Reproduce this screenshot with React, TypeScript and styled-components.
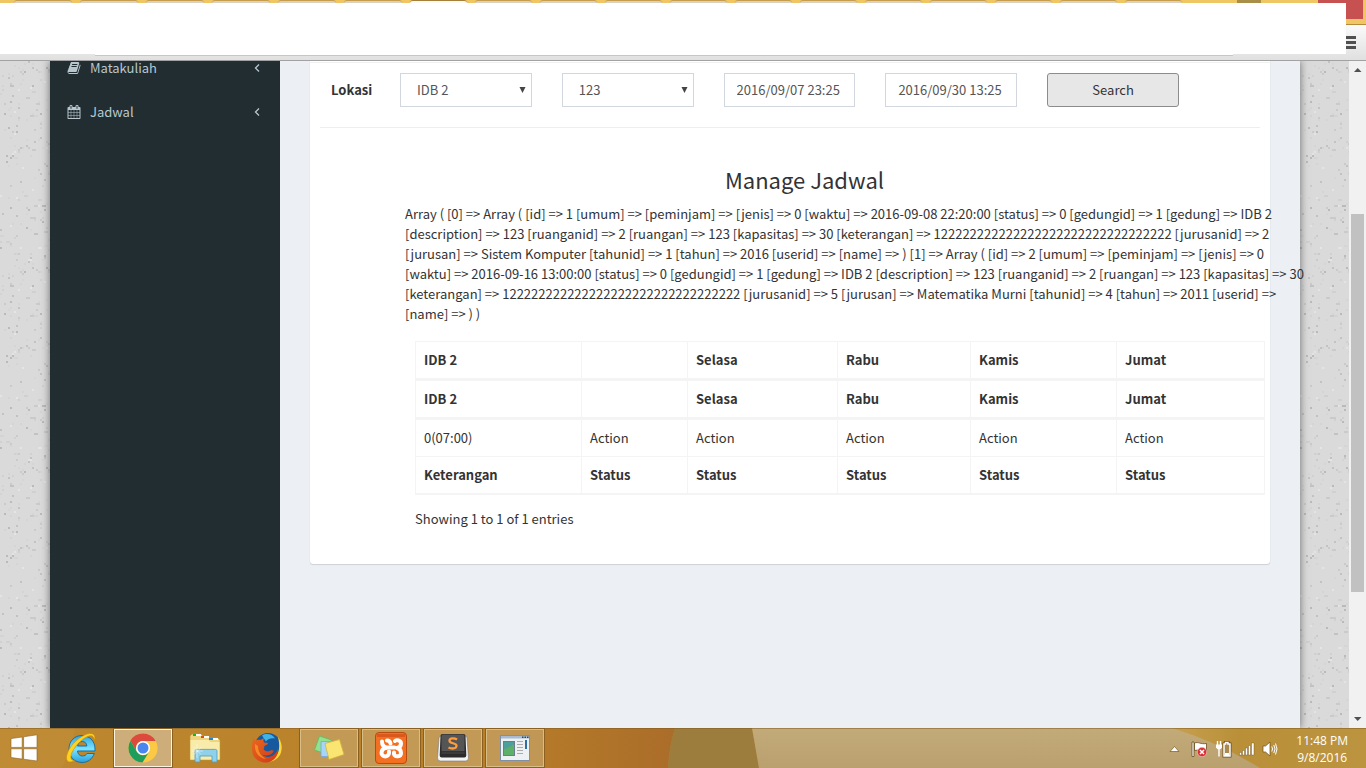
import React from "react";
import styled, { createGlobalStyle } from "styled-components";

const GlobalStyle = createGlobalStyle`
  *, *::before, *::after { box-sizing: border-box; }
  html, body { margin: 0; height: 100%; overflow: hidden; }
  body {
    font-family: "Noto Sans CJK JP", "Noto Sans", sans-serif;
    font-size: 13px;
    line-height: 20px;
    color: #333;
    background: #dadada;
  }
  #root { height: 100%; }
  button, input, select { font: inherit; margin: 0; }
`;

const Desktop = styled.div`
  display: grid;
  grid-template-rows: auto minmax(0, 1fr) auto;
  height: 100vh;
`;

/* ---------- browser frame ---------- */

const Frame = styled.header`
  position: relative;
  height: 61px;
  background: linear-gradient(#f0c564 0 24px, #b48a3c 24px 25px, #fafafa 25px, #e0e0e0 60px);
  border-bottom: 1px solid #a2a2a2;
`;

const TabStrip = styled.div`
  display: flex;
  gap: 8px;
  height: 3px;
  padding-left: 14px;
`;

const Tab = styled.span<{ $active?: boolean; $width: number }>`
  flex: none;
  width: ${(p) => p.$width}px;
  height: 3px;
  border-top: 1px solid ${(p) => (p.$active ? "#a5803a" : "#c79c4c")};
  border-radius: 3px 3px 0 0;
  background: ${(p) => (p.$active ? "#fbfaf6" : "#d8d2c2")};
`;

const WindowButton = styled.span<{ $right: number; $width: number; $height: number; $color: string }>`
  position: absolute;
  top: 0;
  right: ${(p) => p.$right}px;
  width: ${(p) => p.$width}px;
  height: ${(p) => p.$height}px;
  background: ${(p) => p.$color};
`;

const BlankPanel = styled.div`
  position: relative;
  height: 51px;
  margin-right: 20px;
  background: #fff;
`;

const AddressEdge = styled.div`
  height: 2px;
  margin: 0 133px 0 95px;
  background: #fff;
  border-bottom: 1px solid #c6c6c6;
`;

const MenuButton = styled.button`
  position: absolute;
  top: 36px;
  right: 10px;
  width: 10px;
  height: 13px;
  padding: 0;
  border: 0;
  background: linear-gradient(#505050 0 3px, transparent 3px 5px, #505050 5px 8px, transparent 8px 10px, #505050 10px 13px);
`;

/* ---------- page ---------- */

const Viewport = styled.div`
  display: flex;
  min-height: 0;
  overflow: hidden;
`;

const Side = styled.div<{ $width: number }>`
  flex: 0 0 ${(p) => p.$width}px;
  overflow: hidden;
  background: #dadada;
`;

const Wrapper = styled.div`
  position: relative;
  display: flex;
  flex: 1;
  min-width: 0;
  box-shadow: 0 0 8px rgba(0, 0, 0, 0.5);
`;

const Sidebar = styled.aside`
  flex: 0 0 230px;
  overflow: hidden;
  background: #222d32;
`;

const Menu = styled.nav`
  display: flex;
  flex-direction: column;
  margin-top: -15px;
`;

const MenuLink = styled.a`
  display: flex;
  align-items: center;
  gap: 9px;
  height: 44px;
  padding: 0 20px 0 17px;
  line-height: 14px;
  color: #b8c7ce;
  text-decoration: none;

  svg { flex: none; fill: currentColor; }
  span { flex: 1; }
`;

const Content = styled.main`
  flex: 1;
  min-width: 0;
  padding: 0 30px;
  background: #ecf0f5;
`;

const Box = styled.section`
  padding: 1px 10px 35px;
  border-radius: 0 0 3px 3px;
  background: #fff;
  box-shadow: 0 1px 1px rgba(0, 0, 0, 0.12), 0 0 1px rgba(0, 0, 0, 0.15);
`;

const TopRule = styled.hr`
  height: 1px;
  margin: 0 -10px 10px;
  border: 0;
  background: #f0f0f0;
`;

const Filters = styled.form`
  display: grid;
  grid-template-columns: 39px repeat(5, minmax(0, 1fr));
  align-items: center;
  gap: 30px;
  padding: 0 81px 20px 11px;
  border-bottom: 1px solid #eee;
`;

const FilterLabel = styled.label`
  font-weight: 700;
`;

const SelectWrap = styled.div`
  position: relative;

  svg {
    position: absolute;
    top: 14px;
    right: 6px;
    fill: #444;
    pointer-events: none;
  }
`;

const Select = styled.select`
  appearance: none;
  display: block;
  width: 100%;
  height: 34px;
  padding: 0 16px;
  border: 1px solid #d2d6de;
  border-radius: 0;
  background: #fff;
  color: #555;
`;

const DateInput = styled.input`
  display: block;
  width: 100%;
  height: 34px;
  padding: 0 12px 2px;
  border: 1px solid #d2d6de;
  border-radius: 0;
  background: #fff;
  color: #555;
`;

const SearchButton = styled.button`
  height: 34px;
  padding: 0;
  border: 1px solid #8c8c8c;
  border-radius: 3px;
  background: #e7e7e7;
  color: #333;
`;

const Report = styled.div`
  margin: 38px -5px 0 85px;
`;

const Title = styled.h1`
  margin: 0 71px 12px 0;
  padding-left: 10px;
  font-size: 22px;
  line-height: 26px;
  font-weight: 400;
  text-align: center;
`;

const Dump = styled.p`
  margin: 0;
  white-space: nowrap;
`;

const TableArea = styled.div`
  padding: 17px 10px 0;
`;

const Table = styled.table`
  width: 100%;
  table-layout: fixed;
  border-collapse: separate;
  border-spacing: 0;
  border: solid #f4f4f4;
  border-width: 1px 0 0 1px;
`;

const Row = styled.tr<{ $rule: number }>`
  th, td {
    height: ${(p) => p.$rule + 36}px;
    padding: 0 8px;
    border: solid #f4f4f4;
    border-width: 0 1px ${(p) => p.$rule}px 0;
    text-align: left;
  }
`;

const Info = styled.p`
  margin: 14px 0 0;
`;

/* ---------- scrollbar ---------- */

const ScrollBar = styled.div`
  display: flex;
  flex-direction: column;
  flex: 0 0 17px;
  background: #f1f1f1;
`;

const ScrollArrow = styled.svg`
  flex: none;
  width: 17px;
  height: 17px;
  fill: #505050;
`;

const ScrollSpace = styled.div<{ $share: number }>`
  flex: ${(p) => p.$share} 0 0;
`;

const ScrollThumb = styled(ScrollSpace)`
  margin: 0 2px;
  background: #c1c1c1;
`;

/* ---------- taskbar ---------- */

const Taskbar = styled.footer`
  position: relative;
  display: flex;
  justify-content: space-between;
  height: 40px;
  overflow: hidden;
  background: #b98530;
`;

const Wallpaper = styled.svg`
  position: absolute;
  inset: 0;
  width: 100%;
  height: 100%;
`;

const Apps = styled.div`
  position: relative;
  display: flex;
  gap: 4px;
  padding-top: 1px;
`;

const AppButton = styled.button<{ $state?: "open" | "active" }>`
  display: flex;
  align-items: center;
  justify-content: center;
  width: 58px;
  height: 38px;
  padding: 0;
  border: 1px solid
    ${(p) => (p.$state === "active" ? "#fdf3e0" : p.$state === "open" ? "#d9bd86" : "transparent")};
  outline: ${(p) => (p.$state ? "1px solid #8b6020" : "none")};
  background: ${(p) =>
    p.$state === "active" ? "#cdae7a" : p.$state === "open" ? "rgba(200, 170, 115, 0.6)" : "transparent"};
`;

const StartButton = styled(AppButton)`
  width: 48px;
`;

const Tray = styled.div`
  position: relative;
  display: flex;
  align-items: center;
  gap: 7px;
  padding: 1px 18px 0 0;
`;

const TrayToggle = styled.svg`
  margin-right: 4px;
`;

const Clock = styled.time`
  margin-left: 11px;
  font-family: "Open Sans", sans-serif;
  font-size: 12px;
  line-height: 17px;
  text-align: center;
  color: #fff;
`;

/* ---------- drawings ---------- */

function makeSpeckles(seed: number, count: number) {
  let s = seed;
  const next = () => {
    s = (s * 16807) % 2147483647;
    return s / 2147483647;
  };
  const tones = ["#cacaca", "#d0d0d0", "#c2c2c2", "#d4d4d4", "#e4e4e4", "#d5d5d5", "#bababa"];
  return Array.from({ length: count }, () => ({
    x: Math.floor(next() * 26) * 2,
    y: Math.floor(next() * 100) * 2,
    w: next() > 0.85 ? 4 : 2,
    c: tones[Math.floor(next() * tones.length)],
  }));
}

const speckles = makeSpeckles(4711, 170);

function Texture({ id }: { id: string }) {
  return (
    <svg width="100%" height="100%" aria-hidden="true">
      <pattern id={id} width="52" height="200" patternUnits="userSpaceOnUse">
        {speckles.map((d, i) => (
          <rect key={i} x={d.x} y={d.y} width={d.w} height="2" fill={d.c} />
        ))}
      </pattern>
      <rect width="100%" height="100%" fill={`url(#${id})`} />
    </svg>
  );
}

const BookIcon = () => (
  <svg width="14" height="14" viewBox="0 0 1664 1792" aria-hidden="true">
    <path d="M1639 478q40 57 18 129l-275 906q-19 64-76.5 107.5t-122.5 43.5h-923q-77 0-148.5-53.5t-99.5-131.5q-24-67-2-127 0-4 3-27t4-37q1-8-3-21.5t-3-19.5q2-11 8-21t16.5-23.5 16.5-23.5q23-38 45-91.5t30-91.5q3-10 .5-30t-.5-28q3-11 17-28t17-23q21-36 42-92t25-90q1-9-2.5-32t.5-28q4-13 22-30.5t22-22.5q19-26 42.5-84.5t27.5-96.5q1-8-3-25.5t-2-26.5q2-8 9-18t18-23 17-21q8-12 16.5-30.5t15-35 16-36 19.5-32 26.5-23.5 36-11.5 47.5 5.5l-1 3q38-9 51-9h761q74 0 114 56t18 130l-274 906q-36 119-71.5 153.5t-128.500 34.500h-869q-27 0-38 15-11 16-1 43 24 70 144 70h923q29 0 56-15.500t35-41.500l300-987q7-22 5-57 38 15 59 43zm-1064 2q-4 13 2 22.500t20 9.500h608q13 0 25.500-9.500t16.500-22.500l21-64q4-13-2-22.500t-20-9.500h-608q-13 0-25.500 9.500t-16.500 22.500zm-83 256q-4 13 2 22.500t20 9.500h608q13 0 25.500-9.500t16.500-22.500l21-64q4-13-2-22.500t-20-9.500h-608q-13 0-25.500 9.500t-16.500 22.500z" />
  </svg>
);

const CalendarIcon = () => (
  <svg width="14" height="14" viewBox="64 0 1664 1792" aria-hidden="true">
    <path d="M192 1664h288v-288h-288v288zm352 0h320v-288h-320v288zm-352-352h288v-320h-288v320zm352 0h320v-320h-320v320zm-352-384h288v-288h-288v288zm736 736h320v-288h-320v288zm-384-736h320v-288h-320v288zm768 736h288v-288h-288v288zm-384-352h320v-320h-320v320zm-352-864v-288q0-13-9.500-22.500t-22.500-9.500h-64q-13 0-22.500 9.500t-9.500 22.500v288q0 13 9.500 22.500t22.500 9.500h64q13 0 22.500-9.500t9.500-22.500zm736 864h288v-320h-288v320zm-384-384h320v-288h-320v288zm384 0h288v-288h-288v288zm32-480v-288q0-13-9.500-22.500t-22.500-9.500h-64q-13 0-22.500 9.500t-9.500 22.500v288q0 13 9.500 22.500t22.500 9.500h64q13 0 22.500-9.500t9.500-22.500zm384-64v1280q0 52-38 90t-90 38h-1408q-52 0-90-38t-38-90v-1280q0-52 38-90t90-38h128v-96q0-66 47-113t113-47h64q66 0 113 47t47 113v96h384v-96q0-66 47-113t113-47h64q66 0 113 47t47 113v96h128q52 0 90 38t38 90z" />
  </svg>
);

const AngleLeft = () => (
  <svg width="6" height="10" viewBox="0 0 6 10" aria-hidden="true">
    <path d="M5 1.5 1.5 5 5 8.5" style={{ fill: "none" }} stroke="currentColor" strokeWidth="1.3" />
  </svg>
);

const DropArrow = () => (
  <svg width="7" height="6" viewBox="0 0 7 6" aria-hidden="true">
    <path d="M.5 0h6L3.500 6z" />
  </svg>
);

const WindowsIcon = () => (
  <svg width="28" height="28" viewBox="0 0 28 28" aria-hidden="true">
    <path
      d="M1 4.600 12.200 3v10.400H1zM13.600 2.800 27 .8v12.600H13.600zM1 14.800h11.200v10.300L1 23.500zM13.600 14.800H27V27l-13.400-1.800z"
      fill="#fff" stroke="#8c6220" strokeWidth=".6"
    />
  </svg>
);

const IeIcon = () => (
  <svg width="32" height="32" viewBox="0 0 32 32" aria-hidden="true">
    <defs>
      <linearGradient id="ie" x1="0" y1="0" x2="0" y2="1">
        <stop offset="0" stopColor="#2ea6dc" /><stop offset=".5" stopColor="#7be4ff" /><stop offset="1" stopColor="#2aa0dc" />
      </linearGradient>
    </defs>
    <path
      d="M17 3.500c7.500 0 13 5.500 13 13.500v2H12.500c.3 3 2.200 5 5 5 2 0 3.600-1 4.500-2.500h7.300C27.500 26.700 23 30.500 17.200 30.500 9.500 30.500 4 25 4 17S9.500 3.500 17 3.500zM12.600 14h9.300c-.3-2.800-2-4.500-4.600-4.500s-4.300 1.700-4.700 4.500z"
      fill="url(#ie)" stroke="#14679d" strokeWidth=".9"
    />
    <path
      d="M29.500 9C31 4.500 29 1 24.500 1.500 18 2.300 8.500 9.500 4 17.500.500 24 .500 30 5 30c1.500 0 3-.5 4.500-1.300C5.500 28.500 5 25 7 20.500 10.500 13 19 4.700 25 3.800c3-.4 4.300 1.700 4.500 5.200z"
      fill="#ffd21f" stroke="#c98a08" strokeWidth=".6"
    />
  </svg>
);

const ChromeIcon = () => (
  <svg width="30" height="30" viewBox="0 0 30 30" aria-hidden="true">
    <circle cx="15" cy="15" r="14.600" fill="#fbc943" />
    <path d="M2.400 7.700A14.600 14.600 0 0 1 27.700 8H15a7.200 7.200 0 0 0-6.300 10.500z" fill="#dc4a3d" />
    <path d="M2.400 7.700A14.600 14.600 0 0 0 14.500 29.600l6.800-11.100a7.200 7.200 0 0 1-12.600 0z" fill="#1f9d5b" />
    <circle cx="15" cy="15" r="7" fill="#fff" />
    <circle cx="15" cy="15" r="5.500" fill="#4a86ee" />
  </svg>
);

const ExplorerIcon = () => (
  <svg width="34" height="32" viewBox="0 0 34 32" aria-hidden="true">
    <path d="M2 4 4 2h9l2 2h5l1 2h9l2 2v20H2z" fill="#eed57d" stroke="#b99637" strokeWidth=".7" />
    <path d="M5 2h8v2H5z" fill="#fff" /><path d="M5 2h3v2H5z" fill="#19b51f" />
    <path d="M13 4h8v2h-8z" fill="#fff" /><path d="M13 4h3v2h-3z" fill="#d9492a" />
    <path d="M21 6h9v2h-9z" fill="#fff" /><path d="M21 6h4v2h-4z" fill="#1d87dc" />
    <path d="M2.500 8h18l2 2h9v17.500h-29z" fill="#f9eba9" />
    <path d="M7 19c0-1 .6-1.600 1.500-1.600h19c1 0 1.500.6 1.500 1.600v11h-5v-6H12v6H7z" fill="#8fd0ea" stroke="#4f9dc4" strokeWidth=".8" />
    <path d="M9 12v14M4 19h11M6 15.500l7 7m0-7-7 7" stroke="#fff" strokeWidth=".5" />
  </svg>
);

const FirefoxIcon = () => (
  <svg width="32" height="32" viewBox="0 0 32 32" aria-hidden="true">
    <defs>
      <linearGradient id="fx" x1="0" y1="0" x2="1" y2="1">
        <stop offset="0" stopColor="#e86a1c" /><stop offset="1" stopColor="#d2371a" />
      </linearGradient>
    </defs>
    <circle cx="17" cy="14" r="13" fill="#17599f" />
    <path d="M11 3.500c5-3 11-1 13 3-4-1-8 1-9 3z" fill="#3fb3e4" />
    <path d="M27 5c4 5 5 12 2 18-4 6-10 8-15 6 8 0 13-5 14-12 .5-4 0-8-1-12z" fill="#ffd735" />
    <path
      d="M3 5c0 1.500.5 3 1.500 3.500C6 7.500 8 7.500 9.500 8L13 6c-.5 1.500-1 3 0 4.500l4 .5c0 1.500-2 2-3.500 3-.8 1 0 2.500-1 3 1.500 2.500 4 3 7 1.500 1.500-.7 3 0 3 1-2 4-8 5-11.500 3 5 5 14 2 16-6 .5 8-5 14-12 14C7 30.500 1 25 1 17.500 1 12 1.500 8 3 5z"
      fill="url(#fx)"
    />
    <path d="M4 12c-1 8 4 14 11 15-5-3-8-7-8-13z" fill="#f58a25" />
  </svg>
);

const NotesIcon = () => (
  <svg width="34" height="28" viewBox="0 0 34 28" aria-hidden="true">
    <path d="m7.500 2 12 4-5 14-12-4z" fill="#93e08f" stroke="#5dbb62" strokeWidth=".8" />
    <path d="M9 7.500h13v15H9z" fill="#a6d4fa" stroke="#6da9dc" strokeWidth=".8" />
    <path d="m13 9.500 14.500-4 4.500 15-15 5z" fill="#fbe572" stroke="#d3b23c" strokeWidth=".8" />
  </svg>
);

const XamppIcon = () => (
  <svg width="32" height="32" viewBox="0 0 32 32" aria-hidden="true">
    <rect x=".5" y=".5" width="31" height="31" rx="3.500" fill="#f36f21" stroke="#b94a10" />
    <path d="M2 2h28v3H2z" fill="#c84a16" opacity=".6" />
    <g fill="none" stroke="#fff" strokeWidth="4" strokeLinecap="round" strokeLinejoin="round">
      <path d="M7 9.500q0 5.500 5 6h7.500M20 9c1-1.500 6-1 6 2.500 0 2.500-1.500 4-4 4.500 2.500.5 4 2 4 5 0 4-6 4.500-7 1v-1.500" />
      <path d="M12 8.500q3 0 3.500 3M11 16c-3 .5-4.500 2-4.500 5 0 4.500 7.500 4.500 7.500 0V19.500" />
    </g>
  </svg>
);

const SublimeIcon = () => (
  <svg width="32" height="30" viewBox="0 0 32 30" aria-hidden="true">
    <path d="M2 5q0-2 2-2h24q2 0 2 2l1.500 20q0 3-3 3h-25q-3 0-3-3z" fill="#f4f4f4" stroke="#777" strokeWidth=".6" />
    <path d="M3.500 3q0-2 2-2h21q2 0 2 2l.8 19.500q0 2-2 2H4.700q-2 0-2-2z" fill="#2b2b2b" />
    <path d="M4.500 3q0-1.500 1.500-1.500h20Q27.500 1.500 27.500 3v15h-23z" fill="#555" />
    <path d="M4.500 18.500h23V21h-23z" fill="#3a3a3a" />
    <path d="M20 6.500c-2-1.300-7.500-2-7.500 1.200 0 3.300 7.500 1.800 7 5.300-.3 3-5 3-8 1.500" fill="none" stroke="#ff9d3c" strokeWidth="2.300" />
  </svg>
);

const ViewerIcon = () => (
  <svg width="30" height="26" viewBox="0 0 30 26" aria-hidden="true">
    <rect x=".5" y=".5" width="29" height="25" fill="#eef1f4" stroke="#7f90a5" />
    <path d="M1 1h28v2.500H1z" fill="#a9bbd2" /><path d="M22 1.500h1.500V3H22zm2.500 0H26V3h-1.500zm2.500 0h1.500V3H27z" fill="#345" />
    <rect x="3.500" y="6.500" width="11" height="14" fill="#4c9f9b" stroke="#6d7c8c" />
    <path d="M4 14q5-1 10-5v11H4z" fill="#5db069" />
    <path d="M17 6.500h6M17 9.500h6M17 12.500h6M17 15.500h6M17 18.500h6" stroke="#aaa" />
    <path d="M25 5h2v9h-2z" fill="#2f6ea5" />
  </svg>
);

const HiddenIcons = () => (
  <TrayToggle width="11" height="8" viewBox="0 0 11 8" aria-hidden="true">
    <path d="M1 6.500 5.500 1.500 10 6.500z" fill="#fff" stroke="#7a5a20" strokeWidth=".7" />
  </TrayToggle>
);

const FlagIcon = () => (
  <svg width="17" height="18" viewBox="0 0 17 18" aria-hidden="true">
    <path d="M1 2h2v14.500H1zM3.500 3c4-1.500 6 1.500 12 .5V11C10 12 8 9 3.500 10.500z" fill="#fff" stroke="#6a4d1e" strokeWidth=".8" />
    <circle cx="11" cy="12" r="4.700" fill="#dc2f34" stroke="#fff" strokeWidth=".4" />
    <path d="m9 10 4 4m0-4-4 4" stroke="#fff" strokeWidth="1.500" />
  </svg>
);

const BatteryIcon = () => (
  <svg width="17" height="18" viewBox="0 0 17 18" aria-hidden="true">
    <path d="M2.500 1v4M5.500 1v4M4 8v8.500" stroke="#fff" strokeWidth="1.400" fill="none" />
    <path d="M1 4.500h6v3Q6 9.500 4 9.500T1 7.500z" fill="#fff" />
    <path d="M9 4h1.500V2.500H13V4h2v12H9z" fill="#a98a50" stroke="#6a4d1e" strokeWidth="3" />
    <path d="M9 4h1.500V2.500H13V4h2v12H9z" fill="#a98a50" stroke="#fff" strokeWidth="1.500" />
    <path d="M10 13h4v3h-4z" fill="#fff" />
  </svg>
);

const SignalIcon = () => (
  <svg width="16" height="14" viewBox="0 0 16 14" aria-hidden="true">
    <path d="M.5 10.500h2V13h-2zM3.500 8.500h2V13h-2zM6.500 6h2v7h-2zM9.500 3.500h2V13h-2zM12.500 1h2.500v12h-2.500z" fill="#fff" stroke="#6a4d1e" strokeWidth=".4" />
  </svg>
);

const SpeakerIcon = () => (
  <svg width="16" height="16" viewBox="0 0 16 16" aria-hidden="true">
    <path d="M1 5h2.500L8 1v14l-4.500-4H1z" fill="#fff" stroke="#6a4d1e" strokeWidth=".7" />
    <path d="M9.800 5.500q1.500 2.500 0 5M11.800 4q2.500 4 0 8M13.500 2.500q3 5.500 0 11" fill="none" stroke="#fff" />
  </svg>
);

/* ---------- data ---------- */

const tabWidths = [58, 58, 58, 58, 58, 58, 57, 57, 57, 57, 57, 57, 57, 57, 57, 57, 57, 57];

const dumpLines = [
  "Array ( [0] => Array ( [id] => 1 [umum] => [peminjam] => [jenis] => 0 [waktu] => 2016-09-08 22:20:00 [status] => 0 [gedungid] => 1 [gedung] => IDB 2",
  "[description] => 123 [ruanganid] => 2 [ruangan] => 123 [kapasitas] => 30 [keterangan] => 122222222222222222222222222222222 [jurusanid] => 2",
  "[jurusan] => Sistem Komputer [tahunid] => 1 [tahun] => 2016 [userid] => [name] => ) [1] => Array ( [id] => 2 [umum] => [peminjam] => [jenis] => 0",
  "[waktu] => 2016-09-16 13:00:00 [status] => 0 [gedungid] => 1 [gedung] => IDB 2 [description] => 123 [ruanganid] => 2 [ruangan] => 123 [kapasitas] => 30",
  "[keterangan] => 122222222222222222222222222222222 [jurusanid] => 5 [jurusan] => Matematika Murni [tahunid] => 4 [tahun] => 2011 [userid] =>",
  "[name] => ) )",
];

const columnWidths = [166, 106, 150, 133, 146, 148];
const headings = ["IDB 2", "", "Selasa", "Rabu", "Kamis", "Jumat"];
const slots = ["0(07:00)", "Action", "Action", "Action", "Action", "Action"];
const statuses = ["Keterangan", "Status", "Status", "Status", "Status", "Status"];

const HeadingRow = ({ cells, rule }: { cells: string[]; rule: number }) => (
  <Row $rule={rule}>
    {cells.map((c, i) => (
      <th key={i}>{c}</th>
    ))}
  </Row>
);

export default function App() {
  return (
    <Desktop>
      <GlobalStyle />
      <Frame>
        <TabStrip>
          {tabWidths.map((w, i) => (
            <Tab key={i} $width={w} $active={i === 6} />
          ))}
        </TabStrip>
        <WindowButton $right={105} $width={24} $height={3} $color="#a98e48" />
        <WindowButton $right={3} $width={45} $height={19} $color="#c75050" />
        <BlankPanel />
        <AddressEdge />
        <MenuButton aria-label="Menu" />
      </Frame>

      <Viewport>
        <Side $width={50}><Texture id="speckle-left" /></Side>
        <Wrapper>
          <Sidebar>
            <Menu>
              <MenuLink href="#matakuliah"><BookIcon /><span>Matakuliah</span><AngleLeft /></MenuLink>
              <MenuLink href="#jadwal"><CalendarIcon /><span>Jadwal</span><AngleLeft /></MenuLink>
            </Menu>
          </Sidebar>
          <Content>
            <Box>
              <TopRule />
              <Filters onSubmit={(e) => e.preventDefault()}>
                <FilterLabel htmlFor="lokasi">Lokasi</FilterLabel>
                <SelectWrap>
                  <Select id="lokasi" defaultValue="IDB 2"><option>IDB 2</option></Select>
                  <DropArrow />
                </SelectWrap>
                <SelectWrap>
                  <Select aria-label="Ruangan" defaultValue="123"><option>123</option></Select>
                  <DropArrow />
                </SelectWrap>
                <DateInput aria-label="Mulai" defaultValue="2016/09/07 23:25" />
                <DateInput aria-label="Selesai" defaultValue="2016/09/30 13:25" />
                <SearchButton type="submit">Search</SearchButton>
              </Filters>
              <Report>
                <Title>Manage Jadwal</Title>
                <Dump>
                  {dumpLines.map((line, i) => (
                    <React.Fragment key={i}>{line}<br /></React.Fragment>
                  ))}
                </Dump>
                <TableArea>
                  <Table>
                    <colgroup>
                      {columnWidths.map((w, i) => (
                        <col key={i} width={w} />
                      ))}
                    </colgroup>
                    <thead>
                      <HeadingRow cells={headings} rule={3} />
                      <HeadingRow cells={headings} rule={3} />
                    </thead>
                    <tbody>
                      <Row $rule={1}>
                        {slots.map((c, i) => (
                          <td key={i}>{c}</td>
                        ))}
                      </Row>
                    </tbody>
                    <tfoot>
                      <HeadingRow cells={statuses} rule={2} />
                    </tfoot>
                  </Table>
                  <Info>Showing 1 to 1 of 1 entries</Info>
                </TableArea>
              </Report>
            </Box>
          </Content>
        </Wrapper>
        <Side $width={49}><Texture id="speckle-right" /></Side>
        <ScrollBar aria-hidden="true">
          <ScrollArrow viewBox="0 0 17 17"><path d="M5 11h7.500L8.700 7z" /></ScrollArrow>
          <ScrollSpace $share={136} />
          <ScrollThumb $share={378} />
          <ScrollSpace $share={119} />
          <ScrollArrow viewBox="0 0 17 17"><path d="M5 6h7.500L8.700 10z" /></ScrollArrow>
        </ScrollBar>
      </Viewport>

      <Taskbar>
        <Wallpaper viewBox="0 0 1366 40" preserveAspectRatio="none" aria-hidden="true">
          <defs>
            <linearGradient id="amber"><stop offset="0" stopColor="#bd8830" /><stop offset=".7" stopColor="#b98028" /><stop offset="1" stopColor="#ab6d2a" /></linearGradient>
            <linearGradient id="sand" x1="0" y1="0" x2="0" y2="1"><stop offset="0" stopColor="#c3aa79" /><stop offset="1" stopColor="#b9a06e" /></linearGradient>
            <linearGradient id="gold"><stop offset="0" stopColor="#c7a050" /><stop offset=".35" stopColor="#b98f38" /><stop offset="1" stopColor="#bc9440" /></linearGradient>
          </defs>
          <path d="M0 0h675q-6 20-7 40H0z" fill="url(#amber)" />
          <path d="M0 0h75q-4 20-13 40H0z" fill="#c08d38" opacity=".6" />
          <path d="M675 0h77l7 40h-91q1-20 7-40z" fill="#9c7d3d" />
          <path d="M752 0h425q45 14 88 40H759z" fill="url(#sand)" />
          <path d="M1172 0h194v40h-106q-42-26-88-40z" fill="url(#gold)" />
          <path d="M0 0h1366v1H0z" fill="#7d5a20" opacity=".5" />
        </Wallpaper>
        <Apps>
          <StartButton aria-label="Start"><WindowsIcon /></StartButton>
          <AppButton aria-label="Internet Explorer"><IeIcon /></AppButton>
          <AppButton aria-label="Chrome" $state="active"><ChromeIcon /></AppButton>
          <AppButton aria-label="File Explorer"><ExplorerIcon /></AppButton>
          <AppButton aria-label="Firefox"><FirefoxIcon /></AppButton>
          <AppButton aria-label="Sticky Notes" $state="open"><NotesIcon /></AppButton>
          <AppButton aria-label="XAMPP" $state="open"><XamppIcon /></AppButton>
          <AppButton aria-label="Sublime Text" $state="open"><SublimeIcon /></AppButton>
          <AppButton aria-label="Viewer" $state="open"><ViewerIcon /></AppButton>
        </Apps>
        <Tray>
          <HiddenIcons />
          <FlagIcon />
          <BatteryIcon />
          <SignalIcon />
          <SpeakerIcon />
          <Clock>11:48 PM<br />9/8/2016</Clock>
        </Tray>
      </Taskbar>
    </Desktop>
  );
}
